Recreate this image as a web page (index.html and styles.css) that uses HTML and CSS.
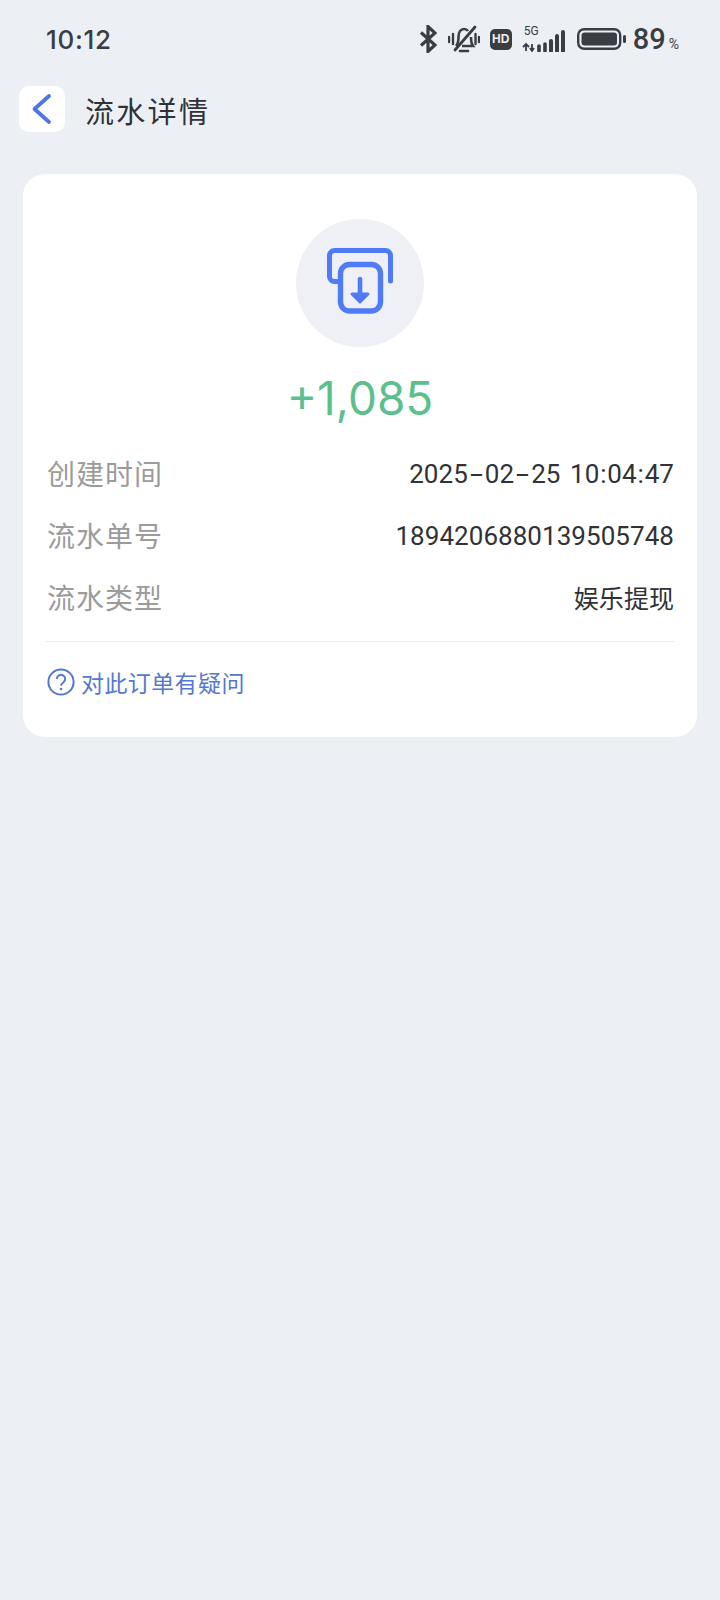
FILE: index.html
```html
<!DOCTYPE html>
<html lang="zh">
<head>
<meta charset="utf-8">
<title>流水详情</title>
<link rel="stylesheet" href="styles.css">
</head>
<body>
<div class="status">
  <span class="time">10:12</span>
  <div class="status-icons">
    <svg class="i-bt" width="18" height="28" viewBox="0 0 18 28"><path d="M2 7.500 16 20 9 26.500V1.500L16 8 2 20.500" fill="none" stroke="#3a3d42" stroke-width="3.200"/></svg>
    <svg class="i-mute" width="32" height="30" viewBox="0 0 32 30"><path d="M8 22c2-2 2.500-5 2.500-9 0-5 2.500-8 5.500-8 1.500 0 3 .5 4 2M23 13c0 4 .5 7 2 9H14" fill="none" stroke="#3a3d42" stroke-width="2.600"/><path d="M12 27h8" stroke="#3a3d42" stroke-width="2.600" stroke-linecap="round"/><path d="M7 26 27 3" stroke="#3a3d42" stroke-width="2.800" stroke-linecap="round"/><path d="M1 13v5M5 10v10M27.500 10v10M31 13v5" stroke="#3a3d42" stroke-width="2.400" stroke-linecap="round"/></svg>
    <span class="hd">HD</span>
    <div class="signal">
      <span class="five-g">5G</span>
      <svg width="44" height="22" viewBox="0 0 44 22"><path d="M1 17l3-3 3 3M4 15v6M10 14v6M8 18l2 3 2-3" stroke="#3a3d42" stroke-width="1.800" fill="none"/><path d="M17 16v5M23 14v7" stroke="#3a3d42" stroke-width="3.600" fill="none" stroke-linecap="round"/><path d="M29 11v10M35 6v15M41 2v19" stroke="#3a3d42" stroke-width="4" fill="none" stroke-linecap="round"/></svg>
    </div>
    <svg class="i-batt" width="49" height="22" viewBox="0 0 49 22"><rect x="1.200" y="1.200" width="42" height="19.600" rx="6" fill="none" stroke="#3a3d42" stroke-width="2.400"/><rect x="4.500" y="4.500" width="35.500" height="13" rx="3" fill="#3a3d42"/><rect x="46" y="7" width="3" height="8" rx="1.500" fill="#3a3d42"/></svg>
    <span class="batt-text">89<small>%</small></span>
  </div>
</div>

<header class="nav">
  <button class="back" type="button" aria-label="返回">
    <svg width="24" height="32" viewBox="0 0 24 32"><path d="M19 3 4.500 16 19 29" fill="none" stroke="#4d76e0" stroke-width="3.800" stroke-linecap="round" stroke-linejoin="round"/></svg>
  </button>
  <h1 class="title">流水详情</h1>
</header>

<main class="card">
  <div class="badge">
    <svg width="70" height="70" viewBox="0 0 70 70"><path d="M65.500 33V7.500a5 5 0 0 0-5-5h-51a5 5 0 0 0-5 5v21a5 5 0 0 0 5 5h6" fill="none" stroke="#4f7bf7" stroke-width="5" stroke-linecap="round"/><rect x="15.500" y="16.500" width="40" height="46.500" rx="9" fill="none" stroke="#4f7bf7" stroke-width="5.400"/><path d="M35 31v14" stroke="#4f7bf7" stroke-width="4.600" stroke-linecap="round"/><path d="M27 46h16l-8 8z" fill="#4f7bf7" stroke="#4f7bf7" stroke-width="3" stroke-linejoin="round"/></svg>
  </div>
  <div class="amount">+1,085</div>
  <div class="rows">
    <div class="row"><span class="label">创建时间</span><span class="value">2025<span class="dash">-</span>02<span class="dash">-</span>25 10<span class="colon">:</span>04<span class="colon">:</span>47</span></div>
    <div class="row"><span class="label">流水单号</span><span class="value">1894206880139505748</span></div>
    <div class="row"><span class="label">流水类型</span><span class="value cjk">娱乐提现</span></div>
  </div>
  <div class="help">
    <svg width="28" height="28" viewBox="0 0 28 28"><circle cx="14" cy="14" r="12.600" fill="none" stroke="#5478d0" stroke-width="2"/><path d="M9.800 11a4.200 4.200 0 1 1 6.500 3.500c-1.500 1-2.300 1.700-2.300 3.200" fill="none" stroke="#5478d0" stroke-width="2"/><circle cx="14" cy="21" r="1.300" fill="#5478d0"/></svg>
    <span class="help-text">对此订单有疑问</span>
  </div>
</main>
</body>
</html>
```
FILE: styles.css
```css
* { box-sizing: border-box; }
html, body { margin: 0; padding: 0; }
body {
  width: 720px;
  height: 1600px;
  overflow: hidden;
  background: #ecf0f5;
  font-family: "Inter", "Noto Sans CJK SC", sans-serif;
  color: #303236;
}
.status {
  height: 78px;
  padding: 0 41px 0 46px;
  display: flex;
  align-items: center;
  justify-content: space-between;
}
.time { font: 500 26px "Inter", sans-serif; letter-spacing: .7px; padding-top: 1px; color: #3a3d42; }
.status-icons { display: flex; align-items: center; }
.i-bt { margin-right: 11px; }
.i-mute { margin-right: 10px; }
.hd {
  width: 22px; height: 21px; border-radius: 5px;
  background: #3a3d42; color: #ecf0f5;
  font: 700 12px/21px "Liberation Sans", sans-serif;
  text-align: center;
  margin-right: 10px;
}
.signal { position: relative; width: 44px; height: 26px; margin-right: 11px; display: flex; align-items: flex-end; }
.signal svg { display: block; }
.five-g { position: absolute; left: 2px; top: -1px; font: 400 12px/13px "Roboto", sans-serif; color: #3a3d42; }
.i-batt { margin-right: 7px; }
.batt-text { font: 500 29px "Roboto", sans-serif; color: #3a3d42; }
.batt-text small { font-size: 14px; margin-left: 3px; font-weight: 400; }
.nav {
  height: 46px;
  margin-top: 8px;
  padding-left: 19px;
  display: flex;
  align-items: center;
}
.back {
  width: 46px; height: 46px;
  border: 0; padding: 0;
  border-radius: 10px;
  background: #fff;
  display: flex; align-items: center; justify-content: center;
}
.title {
  margin: 1px 0 0 20px;
  font-size: 29px;
  font-weight: 400;
  letter-spacing: 2.300px;
  color: #303236;
}
.card {
  margin: 42px 23px 0;
  height: 563px;
  padding: 45px 23px 0;
  background: #fff;
  border-radius: 22px;
  display: flex;
  flex-direction: column;
}
.badge {
  width: 128px; height: 128px;
  border-radius: 50%;
  background: #eef0f6;
  align-self: center;
  display: flex; align-items: center; justify-content: center;
}
.amount {
  margin-top: 23px;
  text-align: center;
  font-size: 46px;
  line-height: 56px;
  color: #5cc08e;
}
.rows { margin-top: 26px; display: flex; flex-direction: column; gap: 21px; }
.row { height: 41px; display: flex; align-items: center; justify-content: space-between; }
.label { font-size: 28px; letter-spacing: 1px; margin-left: 1px; color: #9b9b9b; }
.value { font: 400 26px "Roboto", "Noto Sans CJK SC", sans-serif; letter-spacing: .05px; word-spacing: 3px; padding-top: 2px; color: #303236; }
.value.cjk { font-size: 25px; padding-top: 0; }
.dash { display: inline-block; width: 17px; text-align: center; transform: scaleX(1.8); }
.colon { display: inline-block; width: 8px; text-align: center; }
.help {
  margin-top: 24px;
  padding-top: 23px;
  border-top: 1px solid #e9ebee;
  display: flex;
  align-items: center;
  gap: 6px;
  padding-left: 1px;
  font-size: 23px;
  color: #5478d0;
}
.help-text { letter-spacing: .4px; }
```
